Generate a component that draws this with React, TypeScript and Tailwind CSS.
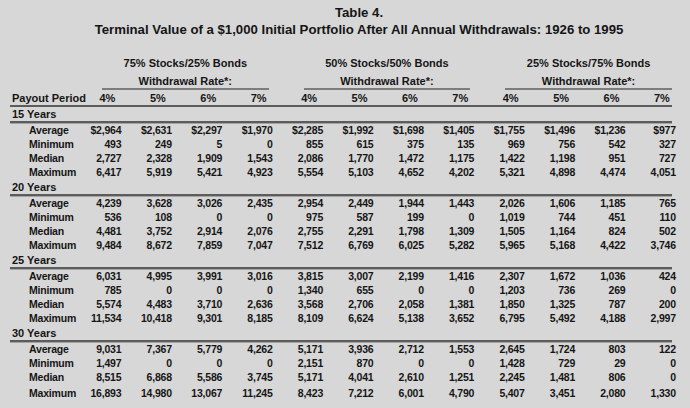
import React from 'react'

type Row = { label: string; values: string[] }
type Section = { title: string; rows: Row[] }

const groups = ['75% Stocks/25% Bonds', '50% Stocks/50% Bonds', '25% Stocks/75% Bonds']
const rates = ['4%', '5%', '6%', '7%']

const sections: Section[] = [
  {
    title: '15 Years',
    rows: [
      { label: 'Average', values: ['$2,964', '$2,631', '$2,297', '$1,970', '$2,285', '$1,992', '$1,698', '$1,405', '$1,755', '$1,496', '$1,236', '$977'] },
      { label: 'Minimum', values: ['493', '249', '5', '0', '855', '615', '375', '135', '969', '756', '542', '327'] },
      { label: 'Median', values: ['2,727', '2,328', '1,909', '1,543', '2,086', '1,770', '1,472', '1,175', '1,422', '1,198', '951', '727'] },
      { label: 'Maximum', values: ['6,417', '5,919', '5,421', '4,923', '5,554', '5,103', '4,652', '4,202', '5,321', '4,898', '4,474', '4,051'] },
    ],
  },
  {
    title: '20 Years',
    rows: [
      { label: 'Average', values: ['4,239', '3,628', '3,026', '2,435', '2,954', '2,449', '1,944', '1,443', '2,026', '1,606', '1,185', '765'] },
      { label: 'Minimum', values: ['536', '108', '0', '0', '975', '587', '199', '0', '1,019', '744', '451', '110'] },
      { label: 'Median', values: ['4,481', '3,752', '2,914', '2,076', '2,755', '2,291', '1,798', '1,309', '1,505', '1,164', '824', '502'] },
      { label: 'Maximum', values: ['9,484', '8,672', '7,859', '7,047', '7,512', '6,769', '6,025', '5,282', '5,965', '5,168', '4,422', '3,746'] },
    ],
  },
  {
    title: '25 Years',
    rows: [
      { label: 'Average', values: ['6,031', '4,995', '3,991', '3,016', '3,815', '3,007', '2,199', '1,416', '2,307', '1,672', '1,036', '424'] },
      { label: 'Minimum', values: ['785', '0', '0', '0', '1,340', '655', '0', '0', '1,203', '736', '269', '0'] },
      { label: 'Median', values: ['5,574', '4,483', '3,710', '2,636', '3,568', '2,706', '2,058', '1,381', '1,850', '1,325', '787', '200'] },
      { label: 'Maximum', values: ['11,534', '10,418', '9,301', '8,185', '8,109', '6,624', '5,138', '3,652', '6,795', '5,492', '4,188', '2,997'] },
    ],
  },
  {
    title: '30 Years',
    rows: [
      { label: 'Average', values: ['9,031', '7,367', '5,779', '4,262', '5,171', '3,936', '2,712', '1,553', '2,645', '1,724', '803', '122'] },
      { label: 'Minimum', values: ['1,497', '0', '0', '0', '2,151', '870', '0', '0', '1,428', '729', '29', '0'] },
      { label: 'Median', values: ['8,515', '6,868', '5,586', '3,745', '5,171', '4,041', '2,610', '1,251', '2,245', '1,481', '806', '0'] },
      { label: 'Maximum', values: ['16,893', '14,980', '13,067', '11,245', '8,423', '7,212', '6,001', '4,790', '5,407', '3,451', '2,080', '1,330'] },
    ],
  },
]

const grid = 'grid grid-cols-[61px_repeat(12,50.42px)] w-[666px]'

export default function App() {
  return (
    <div
      className="w-[690px] h-[408px] bg-[#d7d7d7] text-[#151515] overflow-hidden"
      style={{ fontFamily: '"Liberation Sans", Arial, sans-serif' }}
    >
      {/* title, centred a little right of the page */}
      <div className="pt-[4px] pl-[28px] text-center text-[13.2px] font-bold leading-[17px]">
        <div>Table 4.</div>
        <div>Terminal Value of a $1,000 Initial Portfolio After All Annual Withdrawals: 1926 to 1995</div>
      </div>

      <div className="ml-[10px] mt-[18px]">
        {/* group headers */}
        <div className={grid}>
          <div />
          {groups.map((g) => (
            <div key={g} className="col-span-4 ml-[31px] mr-[4px] text-center text-[11px] font-bold leading-[14px]">
              <div className="mb-[4px]">{g}</div>
              <div className="border-b-2 border-[#7c7c7c]">Withdrawal Rate*:</div>
            </div>
          ))}
        </div>

        {/* column header row */}
        <div className="w-[662px] mt-px border-b-2 border-[#5c5c5c]">
          <div className={`${grid} text-[11px] font-bold leading-[14px]`}>
            <div className="pl-[2px] whitespace-nowrap">Payout Period</div>
            {groups.flatMap((g) =>
              rates.map((r) => (
                <div key={g + r} className="text-right pr-[6px]">
                  {r}
                </div>
              ))
            )}
          </div>
        </div>

        {sections.map((s, si) => (
          <div key={s.title} className={si > 0 ? 'pt-px' : ''}>
            <div className="w-[662px] pl-[2px] border-b-2 border-[#5c5c5c] shadow-[0_1px_0_#a3a3a3] text-[11px] font-bold leading-[14px]">
              {s.title}
            </div>
            {s.rows.map((r, ri) => (
              <div
                key={r.label}
                className={`${grid} text-[10.5px] tracking-[-0.2px] font-bold leading-[14px] ${si === 3 && ri === 3 ? 'pt-[2px]' : ''}`}
              >
                <div className="pl-[19px]">{r.label}</div>
                {r.values.map((v, vi) => (
                  <div key={vi} className="text-right">
                    {v}
                  </div>
                ))}
              </div>
            ))}
          </div>
        ))}
      </div>
    </div>
  )
}
